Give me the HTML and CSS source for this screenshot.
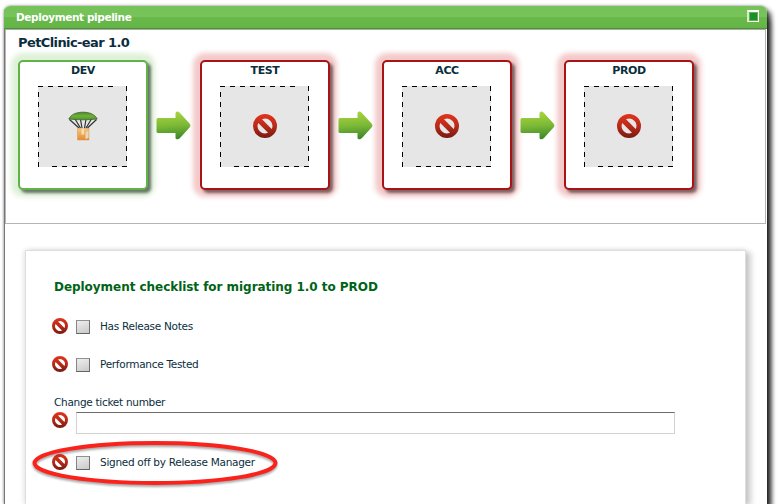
FILE: index.html
```
<!DOCTYPE html>
<html lang="en">
<head>
<meta charset="utf-8">
<title>Deployment pipeline</title>
<link rel="stylesheet" href="styles.css">
</head>
<body>
<svg class="defs" width="0" height="0" aria-hidden="true">
  <defs>
    <linearGradient id="red" x1="0" y1="0" x2="0" y2="1"><stop offset="0" stop-color="#e2341c"/><stop offset=".5" stop-color="#b92a18"/><stop offset="1" stop-color="#761a12"/></linearGradient>
    <linearGradient id="green" gradientUnits="userSpaceOnUse" x1="15" y1="0" x2="17" y2="29"><stop offset="0" stop-color="#add640"/><stop offset=".5" stop-color="#7cb936"/><stop offset="1" stop-color="#398329"/></linearGradient>
    <linearGradient id="canopy" x1="0" y1="0" x2="0" y2="1"><stop offset="0" stop-color="#4f8528"/><stop offset=".5" stop-color="#70b237"/><stop offset="1" stop-color="#4e922b"/></linearGradient>
    <linearGradient id="box" x1="0" y1="0" x2="0" y2="1"><stop offset="0" stop-color="#f7c77d"/><stop offset="1" stop-color="#e58c32"/></linearGradient>
    <symbol id="blocked" viewBox="0 0 24 24"><path fill="url(#red)" fill-rule="evenodd" d="M12 0a12 12 0 1 0 0 24a12 12 0 1 0 0-24zM9 5.3A7.3 7.3 0 0 1 18.7 15zM5.3 9L15 18.7A7.3 7.3 0 0 1 5.3 9z"/></symbol>
    <symbol id="arrow" viewBox="0 0 35 29"><path fill="url(#green)" d="M2 7H19.500V2Q20 0 22 .5L23.500 1.500L34 13Q35 14.500 34 16L24 27Q22 29 20 28L19.500 27V22H2Q.5 22 .5 20.500V8.500Q.5 7 2 7z"/></symbol>
    <symbol id="slot" viewBox="0 0 89 81"><path fill="#e6e6e6" d="M0 0h89v81H0z"/><path fill="none" stroke="#000" stroke-dasharray="5 5" d="M0 .5H76M88.500 0V81M89 80.500H13M.5 81V0"/></symbol>
    <symbol id="parachute" viewBox="0 0 30 30"><path fill="none" stroke="#333" stroke-width="1.200" d="M1.500 8.500L11 17M7 8L12.500 17M12.500 8.500L14 17M18 8.500L16.500 17M23.500 8L18 17M28.500 8.500L19.500 17"/><path fill="url(#canopy)" stroke="#3b652b" stroke-width=".8" d="M.8 8C3 3.500 8 1.200 15 1.200S27 3.500 29.200 8Q22 8.800 15 8.800T.8 8z"/><path fill="url(#box)" stroke="#dc9547" stroke-width=".5" d="M9.500 17.500h11.500v11.500h-11.500z"/><path fill="#fae0b0" d="M13.500 17.500h2.500v6h-2.500z"/><path fill="#e4d7c3" d="M17.500 21l3-1v7l-3 1z"/></symbol>
  </defs>
</svg>
<main class="window">
  <header class="titlebar"><span class="caption">Deployment pipeline</span><span class="maximize"></span></header>
  <section class="pipeline">
    <h1 class="app">PetClinic-ear 1.0</h1>
    <div class="stages">
      <div class="stage open"><h2 class="name">DEV</h2><div class="target"><svg class="slot"><use href="#slot"/></svg><svg class="package"><use href="#parachute"/></svg></div></div>
      <svg class="arrow"><use href="#arrow"/></svg>
      <div class="stage"><h2 class="name">TEST</h2><div class="target"><svg class="slot"><use href="#slot"/></svg><svg class="stop"><use href="#blocked"/></svg></div></div>
      <svg class="arrow"><use href="#arrow"/></svg>
      <div class="stage"><h2 class="name">ACC</h2><div class="target"><svg class="slot"><use href="#slot"/></svg><svg class="stop"><use href="#blocked"/></svg></div></div>
      <svg class="arrow"><use href="#arrow"/></svg>
      <div class="stage"><h2 class="name">PROD</h2><div class="target"><svg class="slot"><use href="#slot"/></svg><svg class="stop"><use href="#blocked"/></svg></div></div>
    </div>
  </section>
  <section class="details">
    <div class="checklist">
      <h2 class="heading">Deployment checklist for migrating 1.0 to PROD</h2>
      <div class="check"><svg class="mark"><use href="#blocked"/></svg><span class="checkbox"></span><span class="label">Has Release Notes</span></div>
      <div class="check"><svg class="mark"><use href="#blocked"/></svg><span class="checkbox"></span><span class="label">Performance Tested</span></div>
      <div class="ticket"><span class="label ticket-label">Change ticket number</span><div class="entry"><svg class="mark"><use href="#blocked"/></svg><span class="field"></span></div></div>
      <div class="check signed"><svg class="mark"><use href="#blocked"/></svg><span class="checkbox"></span><span class="label">Signed off by Release Manager</span>
        <svg class="highlight" viewBox="0 0 248 48"><ellipse cx="124" cy="23" rx="120.500" ry="20" fill="none" stroke="#fb221b" stroke-width="4"/></svg>
      </div>
    </div>
  </section>
</main>
</body>
</html>
```
FILE: styles.css
```
* { box-sizing: border-box; }
body { margin: 0; padding: 6px 0 0 4px; height: 504px; overflow: hidden; background: #fff; font-family: "DejaVu Sans", sans-serif; font-size: 11px; color: #0b2e3d; }
h1, h2 { margin: 0; }
svg { display: block; flex: none; }
.defs { position: absolute; }
.window { width: 763px; height: 498px; border-radius: 6px 6px 0 0; background: linear-gradient(90deg, #777 1px, #fff 1px); box-shadow: 0 0 3px rgba(0,0,0,.5), 4px 4px 5px rgba(0,0,0,.72), 4px 12px 5px rgba(0,0,0,.4); }
.titlebar { display: flex; justify-content: space-between; align-items: center; height: 23px; padding: 0 8px 2px 12px; border-radius: 6px 6px 0 0; border-bottom: 1px solid #4c9432; background: linear-gradient(#74c258 0, #77c45b 50%, #68b94a 51%, #65b447); color: #fff; }
.caption { padding-top: 1px; font-weight: bold; font-size: 10.5px; letter-spacing: -.39px; }
.maximize { width: 12px; height: 12px; border: solid #fff; border-width: 2px 1px 1px 2px; border-left-color: #d4edcb; background: #189226; box-shadow: inset 0 0 0 1px #67ae54; }
.pipeline { height: 195px; margin: 0 1px; padding: 5px 11px 0 12px; border: 1px solid #b5b5b5; border-top: 1px solid #aaa; }
.app { height: 25px; font-size: 13px; line-height: 15px; letter-spacing: -.6px; }
.stages { display: flex; align-items: center; }
.stage { flex: none; width: 130px; height: 130px; border: 2px solid #a81415; border-radius: 5px; background: #fff; box-shadow: 3px 3px 3px rgba(45,25,25,.6), 0 0 5px 7px #f4caca; }
.stage.open { border-color: #60b346; box-shadow: 3px 3px 3px rgba(25,35,25,.6), 0 0 5px 7px #dff1d9; }
.name { padding-top: 2px; height: 24px; text-align: center; font-size: 11px; line-height: 13px; letter-spacing: -.4px; }
.target { display: grid; width: 89px; height: 81px; margin-left: 18px; place-items: center; }
.target > svg { grid-area: 1 / 1; }
.slot { width: 89px; height: 81px; }
.stop { width: 24px; height: 24px; margin: 0 0 1px 1px; }
.package { width: 30px; height: 30px; margin: 0 0 2px 1px; }
.arrow { width: 35px; height: 29px; margin: 0 9px 0 8px; }
.details { padding: 26px 0 0 21px; }
.checklist { width: 721px; height: 254px; padding: 28px 0 0 28px; border: 1px solid #dedede; border-bottom: 0; background: #fff; box-shadow: 5px 2px 6px rgba(0,0,0,.2), -1px 0 5px rgba(0,0,0,.12); }
.heading { height: 39px; font-size: 12px; line-height: 16px; letter-spacing: -.045px; color: #006317; }
.check { position: relative; display: flex; align-items: center; height: 16px; margin-left: -2px; margin-bottom: 22px; }
.mark { width: 16px; height: 16px; }
.checkbox { width: 14px; height: 14px; margin: 2px 10px 0 8px; border: 1px solid; border-color: #929292 #707070 #646464 #858585; background: linear-gradient(160deg, #eee, #c9c9c9); }
.label { padding-bottom: 1px; font-size: 10.5px; line-height: 14px; letter-spacing: -.29px; white-space: nowrap; }
.ticket { display: flex; flex-direction: column; height: 60px; }
.ticket-label { height: 18px; padding-top: 1px; }
.entry { display: flex; align-items: flex-start; margin-left: -2px; }
.field { width: 599px; height: 22px; margin-left: 8px; border: 1px solid #d2d2d2; border-top-color: #6d6d6d; }
.signed { margin-bottom: 0; }
.highlight { position: absolute; left: -21px; top: -14px; width: 248px; height: 48px; overflow: visible; filter: drop-shadow(0 2px 1px rgba(0,0,0,.35)); }
```
